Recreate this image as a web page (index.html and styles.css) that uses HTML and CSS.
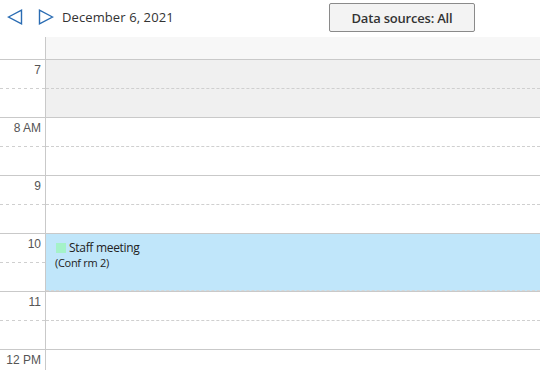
FILE: index.html
```html
<!DOCTYPE html>
<html>
<head>
<meta charset="utf-8">
<link rel="stylesheet" href="styles.css">
</head>
<body>
<div class="toolbar">
  <button class="nav" aria-label="Previous">
    <svg width="16" height="16" viewBox="0 0 16 16"><path d="M1.5 8 L14.5 1.2 L14.5 14.8 Z" fill="none" stroke="#2a6cb3" stroke-width="1.4" stroke-linejoin="miter"/></svg>
  </button>
  <button class="nav" aria-label="Next">
    <svg width="16" height="16" viewBox="0 0 16 16"><path d="M14.5 8 L1.5 1.2 L1.5 14.8 Z" fill="none" stroke="#2a6cb3" stroke-width="1.4" stroke-linejoin="miter"/></svg>
  </button>
  <span class="date">December 6, 2021</span>
  <button class="sources">Data sources: All</button>
</div>
<div class="dayhead">
  <div class="corner"></div>
  <div class="dayhead-cell"></div>
</div>
<div class="grid">
  <div class="hour off"><div class="time">7</div><div class="slot"><div class="half"></div><div class="half"></div></div></div>
  <div class="hour"><div class="time">8 AM</div><div class="slot"><div class="half"></div><div class="half"></div></div></div>
  <div class="hour"><div class="time">9</div><div class="slot"><div class="half"></div><div class="half"></div></div></div>
  <div class="hour"><div class="time">10</div><div class="slot"><div class="half"></div><div class="half"></div>
    <div class="event">
      <div class="ev-title"><span class="ev-mark"></span>Staff meeting</div>
      <div class="ev-loc">(Conf rm 2)</div>
    </div>
  </div></div>
  <div class="hour"><div class="time">11</div><div class="slot"><div class="half"></div><div class="half"></div></div></div>
  <div class="hour"><div class="time">12 PM</div><div class="slot"><div class="half"></div><div class="half"></div></div></div>
</div>
</body>
</html>
```
FILE: styles.css
```css
* { box-sizing: border-box; }
html, body { margin: 0; padding: 0; background: #fff; }
body {
  width: 540px;
  height: 370px;
  overflow: hidden;
  font-family: "Open Sans", "Noto Sans", sans-serif;
  color: #333;
}
.toolbar {
  height: 37px;
  display: flex;
  align-items: flex-start;
  padding-left: 7px;
}
.nav {
  border: 0;
  background: none;
  padding: 0;
  margin: 9px 0 0 0;
  width: 16px;
  height: 16px;
  display: block;
}
.nav + .nav { margin-left: 15px; }
.nav svg { display: block; }
.date {
  margin: 8px 0 0 8px;
  font-size: 13px;
  line-height: 18px;
  color: #333;
  letter-spacing: 0.1px;
}
.sources {
  margin: 3px 0 0 auto;
  margin-right: 65px;
  width: 146px;
  height: 29px;
  border: 1px solid #8a8a8a;
  border-radius: 2px;
  background: #f3f3f3;
  font-family: "Open Sans", "Noto Sans", sans-serif;
  font-size: 13px;
  font-weight: 600;
  color: #333;
  letter-spacing: -0.2px;
  padding: 0;
}
.dayhead {
  display: flex;
  height: 22px;
}
.corner {
  width: 46px;
  border-right: 1px solid #c9c9c9;
}
.dayhead-cell {
  flex: 1;
  background: #f7f7f7;
}
.grid {
  height: 311px;
  overflow: hidden;
}
.hour {
  display: flex;
  height: 58px;
  border-top: 1px solid #c9c9c9;
}
.time {
  width: 46px;
  border-right: 1px solid #c9c9c9;
  text-align: right;
  padding: 3px 4px 0 0;
  font-family: "Liberation Sans", Arial, sans-serif;
  font-size: 12px;
  color: #555;
  background-image: linear-gradient(to right, #cfcfcf 50%, transparent 50%);
  background-size: 6px 1px;
  background-repeat: repeat-x;
  background-position: 0 28px;
}
.slot {
  flex: 1;
  position: relative;
  display: flex;
  flex-direction: column;
}
.half { height: 28px; }
.half + .half { height: 29px; border-top: 1px dashed #cfcfcf; }
.off .slot { background: #f0f0f0; }
.event {
  position: absolute;
  left: 0;
  right: 0;
  top: 0;
  bottom: 0;
  background: #c0e6fa;
  border-bottom: 1px dashed #d8d8d8;
  padding: 6px 0 0 9px;
  font-family: "Open Sans", "Noto Sans", sans-serif;
}
.ev-title {
  display: flex;
  align-items: center;
  font-size: 12px;
  line-height: 15px;
  color: #222;
  letter-spacing: -0.3px;
}
.ev-mark {
  width: 10px;
  height: 10px;
  background: #a4f2c8;
  margin: 1px 3px 0 1px;
}
.ev-loc {
  font-size: 11px;
  line-height: 14px;
  color: #222;
  margin-top: 1px;
  letter-spacing: -0.3px;
}
```
